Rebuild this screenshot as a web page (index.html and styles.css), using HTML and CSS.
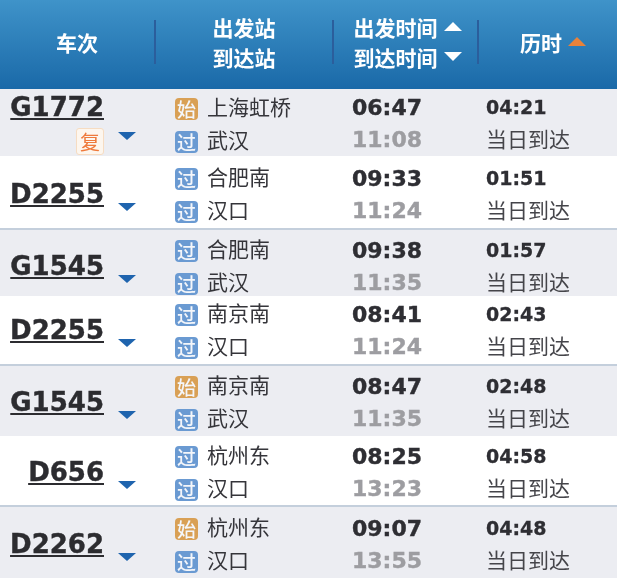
FILE: index.html
```html
<!DOCTYPE html>
<html lang="zh">
<head>
<meta charset="utf-8">
<title>车次列表</title>
<link rel="stylesheet" href="styles.css">
</head>
<body>
<div class="board">
  <div class="head">
    <div class="hcell hc-train">车次</div>
    <div class="hcell hc-station"><span>出发站</span><span>到达站</span></div>
    <div class="hcell hc-time">
      <div class="hline">出发时间<i class="tri up"></i></div>
      <div class="hline">到达时间<i class="tri down"></i></div>
    </div>
    <div class="hcell hc-dur"><div class="hline">历时<i class="tri up orange"></i></div></div>
  </div>

  <div class="row alt r1">
    <div class="train stacked">
      <a class="num">G1772</a>
      <i class="arrow"></i>
      <span class="fu">复</span>
    </div>
    <div class="st"><div class="ln"><b class="tag start">始</b>上海虹桥</div><div class="ln"><b class="tag pass">过</b>武汉</div></div>
    <div class="tm"><div class="dep">06:47</div><div class="arr">11:08</div></div>
    <div class="du"><div class="len">04:21</div><div class="day">当日到达</div></div>
  </div>

  <div class="row r2 line">
    <div class="train"><a class="num">D2255</a><i class="arrow"></i></div>
    <div class="st"><div class="ln"><b class="tag pass">过</b>合肥南</div><div class="ln"><b class="tag pass">过</b>汉口</div></div>
    <div class="tm"><div class="dep">09:33</div><div class="arr">11:24</div></div>
    <div class="du"><div class="len">01:51</div><div class="day">当日到达</div></div>
  </div>

  <div class="row alt r3">
    <div class="train"><a class="num">G1545</a><i class="arrow"></i></div>
    <div class="st"><div class="ln"><b class="tag pass">过</b>合肥南</div><div class="ln"><b class="tag pass">过</b>武汉</div></div>
    <div class="tm"><div class="dep">09:38</div><div class="arr">11:35</div></div>
    <div class="du"><div class="len">01:57</div><div class="day">当日到达</div></div>
  </div>

  <div class="row r4 line">
    <div class="train"><a class="num">D2255</a><i class="arrow"></i></div>
    <div class="st"><div class="ln"><b class="tag pass">过</b>南京南</div><div class="ln"><b class="tag pass">过</b>汉口</div></div>
    <div class="tm"><div class="dep">08:41</div><div class="arr">11:24</div></div>
    <div class="du"><div class="len">02:43</div><div class="day">当日到达</div></div>
  </div>

  <div class="row alt r5">
    <div class="train"><a class="num">G1545</a><i class="arrow"></i></div>
    <div class="st"><div class="ln"><b class="tag start">始</b>南京南</div><div class="ln"><b class="tag pass">过</b>武汉</div></div>
    <div class="tm"><div class="dep">08:47</div><div class="arr">11:35</div></div>
    <div class="du"><div class="len">02:48</div><div class="day">当日到达</div></div>
  </div>

  <div class="row r6 line">
    <div class="train"><a class="num">D656</a><i class="arrow"></i></div>
    <div class="st"><div class="ln"><b class="tag pass">过</b>杭州东</div><div class="ln"><b class="tag pass">过</b>汉口</div></div>
    <div class="tm"><div class="dep">08:25</div><div class="arr">13:23</div></div>
    <div class="du"><div class="len">04:58</div><div class="day">当日到达</div></div>
  </div>

  <div class="row alt r7">
    <div class="train"><a class="num">D2262</a><i class="arrow"></i></div>
    <div class="st"><div class="ln"><b class="tag start">始</b>杭州东</div><div class="ln"><b class="tag pass">过</b>汉口</div></div>
    <div class="tm"><div class="dep">09:07</div><div class="arr">13:55</div></div>
    <div class="du"><div class="len">04:48</div><div class="day">当日到达</div></div>
  </div>
</div>
</body>
</html>
```
FILE: styles.css
```css
* { box-sizing: border-box; }
html, body { margin: 0; padding: 0; background: #fff; }
body {
  font-family: "Noto Sans CJK SC", "DejaVu Sans", sans-serif;
  color: #2e2e33;
  overflow: hidden;
}
.board { width: 617px; filter: blur(0.35px); }

.head {
  height: 89px;
  padding-bottom: 6px;
  display: grid;
  grid-template-columns: 154px 178px 145px 140px;
  align-items: center;
  color: #fff;
  font-size: 21px;
  font-weight: 700;
  background: linear-gradient(#3f93c9, #1a69a8);
}
.hcell {
  height: 44px;
  display: flex;
  flex-direction: column;
  justify-content: center;
  align-items: center;
  line-height: 30px;
  border-left: 2px solid #2b5e9c;
}
.hc-train { border-left: 0; }
.hc-time { padding-left: 4px; }
.hc-dur { padding-left: 10px; }
.hline { display: flex; align-items: center; gap: 6px; }
.tri { width: 0; height: 0; border-left: 9px solid transparent; border-right: 9px solid transparent; }
.tri.up { border-bottom: 9px solid #fff; }
.tri.down { border-top: 9px solid #fff; }
.tri.up.orange { border-bottom-color: #e8823a; }

.row {
  display: grid;
  grid-template-columns: 156px 194px 135px 132px;
  align-items: start;
  background: #fff;
}
.row.alt { background: #ecedf2; }
.row.line { box-shadow: inset 0 -2px 0 #c4cfdc; }
.r1 { height: 67px; padding-top: 1px; }
.r2 { height: 74px; padding-top: 4px; }
.r3 { height: 66px; padding-top: 2px; }
.r4 { height: 70px; padding-top: 0; }
.r5 { height: 70px; padding-top: 2px; }
.r6 { height: 71px; padding-top: 2px; }
.r7 { height: 71px; padding-top: 3px; }

.train {
  height: 66px;
  display: flex;
  justify-content: flex-end;
  align-items: flex-end;
  gap: 14px;
  padding: 0 20px 15px 0;
}
.train.stacked {
  display: grid;
  grid-template-columns: auto 18px;
  grid-template-rows: 34px 28px;
  justify-content: end;
  align-items: start;
  gap: 0 14px;
  padding: 0 20px 0 0;
}
.num {
  font-family: "DejaVu Sans", sans-serif;
  font-size: 26px;
  font-weight: 700;
  line-height: 34px;
  color: #2c2c30;
  -webkit-text-stroke: 0.4px #2c2c30;
  text-decoration: underline;
  text-decoration-thickness: 2px;
  text-underline-offset: 2px;
}
.arrow {
  display: block;
  width: 0;
  height: 0;
  border-left: 9px solid transparent;
  border-right: 9px solid transparent;
  border-top: 8px solid #1f64ae;
}
.stacked .num { grid-column: 1; grid-row: 1; }
.stacked .fu { grid-column: 1; grid-row: 2; justify-self: end; margin-top: 4px; }
.stacked .arrow { grid-column: 2; grid-row: 2; margin-top: 8px; }
.fu {
  width: 28px;
  height: 27px;
  display: flex;
  align-items: center;
  justify-content: center;
  font-size: 20px;
  line-height: 1;
  color: #ef7a3c;
  background: #fdf6ee;
  border: 1px solid #f6dcc2;
  border-radius: 3px;
}
.st { padding-left: 19px; margin-top: -1px; }
.ln {
  display: flex;
  align-items: center;
  gap: 9px;
  height: 33px;
  font-size: 21px;
  color: #35353a;
  white-space: nowrap;
}
.tag {
  width: 23px;
  height: 22px;
  margin-top: 6px;
  border-radius: 4px;
  color: #f4f6fa;
  font-size: 19px;
  font-weight: 500;
  line-height: 22px;
  text-align: center;
  flex: none;
}
.tag.start { background: #d9a055; }
.tag.pass { background: #6a9ad2; }
.tm, .du { font-family: "DejaVu Sans", sans-serif; font-weight: 700; padding-top: 2px; white-space: nowrap; }
.r1 .tm, .r1 .du { padding-top: 1px; }
.tm { padding-left: 2px; font-size: 22px; }
.dep { height: 32px; line-height: 33px; color: #2e2e33; -webkit-text-stroke: 0.4px #2e2e33; }
.arr { height: 33px; line-height: 33px; color: #9d9da1; -webkit-text-stroke: 0.4px #9d9da1; }
.du { padding-left: 1px; }
.len { height: 31px; line-height: 33px; font-size: 19px; color: #2e2e33; -webkit-text-stroke: 0.3px #2e2e33; }
.day {
  height: 33px;
  line-height: 33px;
  font-family: "Noto Sans CJK SC", sans-serif;
  font-size: 21px;
  font-weight: 400;
  color: #45454a;
}
```
